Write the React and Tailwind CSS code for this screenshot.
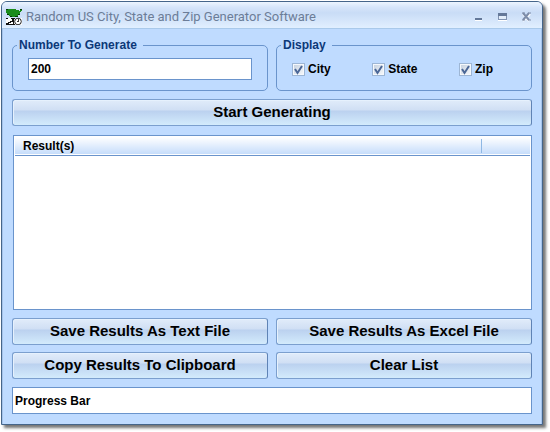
import React from 'react';

const buttonClass =
  'h-[27px] w-full rounded-[3px] border border-[#7b9fce] border-r-[#5f83b5] bg-[linear-gradient(#e1ecfa_0%,#d0dff4_40%,#bbd1ef_44%,#d3ebfc_100%)] pb-0.5 text-center text-[15px] leading-5 font-bold text-black shadow-[inset_1px_1px_0_#e6f1fd]';

function AppIcon() {
  return (
    <svg width="16" height="16" viewBox="0 0 16 16" aria-hidden="true">
      <g shapeRendering="crispEdges">
        <path d="M0 0h10v1h3v1h1V0h2v2h-1v1h-1v2h-1v1h-1v2h-1V7H9v1H6V7H3V6H1V4H0z" fill="#1b8c1b" />
        <path d="M0 0h2v1H0zM14 0h2v1h-2zM1 5h2v1H1zM4 7h2v1H4zM9 7h3v1H9zM12 5h2v1h-2z" fill="#033b05" />
        <path d="M0 9h16v7H0z" fill="#fff" />
        <path d="M0 9h2v1H0zM5 9h4v1H5zM6 10h2v2H6zM4 12h3v1H4zM2 13h3v1H2zM0 14h3v1H0zM0 15h9v1H0zM7 12h1v3H7z" fill="#111" />
      </g>
      <circle cx="12" cy="12.500" r="3.300" fill="#fff" stroke="#222" strokeWidth="1" />
      <path d="M11 12h2v1h-2zM12 10h1v2h-1z" fill="#333" shapeRendering="crispEdges" />
    </svg>
  );
}

function TitleBar() {
  return (
    <header className="flex h-[27px] items-center gap-1 border-b border-[#a9c9ea] bg-[linear-gradient(#edf5ff_0%,#d6e5fa_20%,#c9dcf6_42%,#e1efff_100%)] pt-1 pr-2 pl-1">
      <AppIcon />
      <h1 className="grow font-['Roboto','Noto_Sans',sans-serif] text-[13px] leading-4 whitespace-nowrap text-[#6c7d98]">
        Random US City, State and Zip Generator Software
      </h1>
      <div className="flex gap-2">
        <button type="button" aria-label="Minimize" className="size-4">
          <svg width="16" height="16" viewBox="0 0 16 16" shapeRendering="crispEdges">
            <path d="M5 11h7v1H5z" fill="#fff" />
            <path d="M5 9h7v2H5z" fill="#647899" />
          </svg>
        </button>
        <button type="button" aria-label="Maximize" className="size-4">
          <svg width="16" height="16" viewBox="0 0 16 16" shapeRendering="crispEdges">
            <path d="M4 11h9v1H4z" fill="#fff" />
            <path d="M4.500 4.500h8v6h-8z" fill="#e3eefb" stroke="#8293b1" />
            <path d="M4 4h9v3H4z" fill="#647899" />
          </svg>
        </button>
        <button type="button" aria-label="Close" className="size-4">
          <svg width="16" height="16" viewBox="0 0 16 16">
            <path d="M5 5l6 7M12 5l-7 7" stroke="#fff" strokeWidth="2" />
            <path d="M5 4l6 7M11 4l-6 7" stroke="#7e8da9" strokeWidth="2" />
            <path d="M4 4h3M10 4h3M4 11h3M10 11h3" stroke="#7e8da9" />
          </svg>
        </button>
      </div>
    </header>
  );
}

function Group({ title, children }) {
  return (
    <fieldset className="h-[54px] min-w-0 rounded-[5px] border border-[#6a94cc]">
      <legend className="ml-1 pr-1.5 pl-0.5 text-[12px] leading-4 font-bold text-[#0c3878]">{title}</legend>
      {children}
    </fieldset>
  );
}

function Check({ label }) {
  return (
    <label className="flex items-center gap-[3px] text-[12px] leading-4 font-bold">
      <span className="relative size-[13px]">
        <input
          type="checkbox"
          defaultChecked
          className="peer block size-[13px] appearance-none border border-[#9db6d5] bg-[linear-gradient(135deg,#c3cfde,#f8fafc)] shadow-[inset_0_0_0_1px_#f5f8fc]"
        />
        <svg
          className="pointer-events-none absolute inset-0 hidden peer-checked:block"
          width="13"
          height="13"
          viewBox="0 0 13 13"
          aria-hidden="true"
        >
          <path d="M3 6l2.500 4L10 3" fill="none" stroke="#4b6797" strokeWidth="2" />
        </svg>
      </span>
      {label}
    </label>
  );
}

function Results() {
  return (
    <div className="mt-[9px] ml-px grow border border-[#6a94cc] bg-white p-px">
      <table className="w-full table-fixed border-collapse">
        <thead>
          <tr className="h-[18px] border-b border-[#6a94cc] bg-[linear-gradient(#ffffff,#c6ddfb)]">
            <th scope="col" className="p-0 pl-2 text-left text-[12px] leading-4 font-bold">
              Result(s)
            </th>
            <td className="w-[49px] p-0">
              <div className="h-3.5 border-l border-[#8fb8e4]" />
            </td>
          </tr>
        </thead>
      </table>
    </div>
  );
}

export default function App() {
  return (
    <div className="flex min-h-screen bg-white pt-px pr-[7px] pb-[7px] pl-px font-['Liberation_Sans',Arial,sans-serif] text-black">
      <main className="flex grow flex-col overflow-hidden rounded-t-[6px] border border-[#45658a] bg-[#bfdbff] shadow-[3px_3px_3px_0_rgba(60,60,60,0.7)]">
        <TitleBar />
        <div className="flex grow flex-col border-x border-[#a5c3ea] px-[9px] pt-2 pb-2.5">
          <div className="grid grid-cols-2 gap-2">
            <Group title="Number To Generate">
              <input
                aria-label="Number To Generate"
                defaultValue="200"
                className="mx-[15px] mt-[5px] block h-[22px] w-[calc(100%-30px)] border border-[#6a94cc] bg-white px-0.5 text-[12px] leading-4 font-bold outline-none"
              />
            </Group>
            <Group title="Display">
              <div className="mt-2 flex justify-between pr-[38px] pl-[15px]">
                <Check label="City" />
                <Check label="State" />
                <Check label="Zip" />
              </div>
            </Group>
          </div>
          <div className="mt-2 grid">
            <button type="button" className={buttonClass}>
              Start Generating
            </button>
          </div>
          <Results />
          <div className="mt-2 grid grid-cols-2 gap-x-2 gap-y-[7px]">
            <button type="button" className={buttonClass}>
              Save Results As Text File
            </button>
            <button type="button" className={buttonClass}>
              Save Results As Excel File
            </button>
            <button type="button" className={buttonClass}>
              Copy Results To Clipboard
            </button>
            <button type="button" className={buttonClass}>
              Clear List
            </button>
          </div>
          <div className="mt-2 flex h-[27px] items-center border border-[#6a94cc] bg-white px-0.5 text-[12px] leading-4 font-bold">
            Progress Bar
          </div>
        </div>
      </main>
    </div>
  );
}
